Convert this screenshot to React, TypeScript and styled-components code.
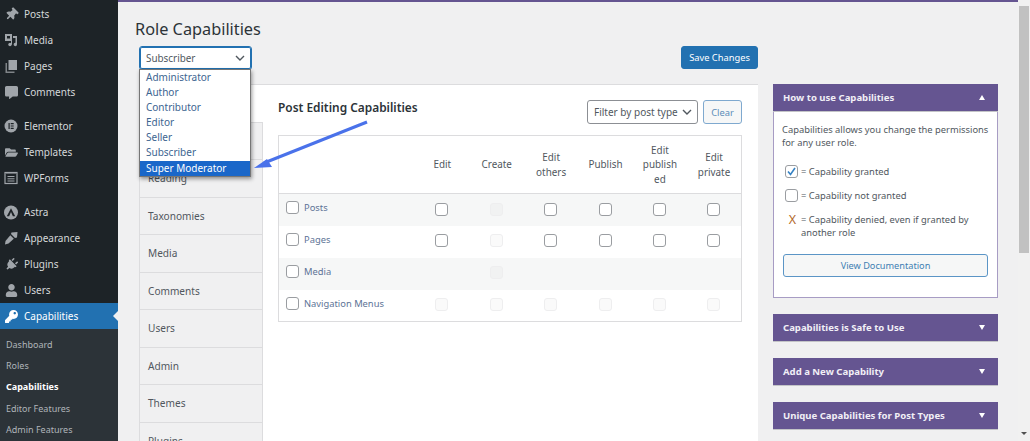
import React from "react"
import styled, { createGlobalStyle } from "styled-components"
import { FaThumbtack, FaCommentAlt, FaFolderOpen, FaPlug, FaUser, FaKey } from "react-icons/fa"

const GlobalStyle = createGlobalStyle`
  html, body {
    margin: 0;
    padding: 0;
    height: 100%;
    overflow: hidden;
    background: #f0f0f1;
  }
  * {
    box-sizing: border-box;
  }
`

const purple = "#655591"
const font = `"Noto Sans", "Open Sans", sans-serif`

const Page = styled.div`
  position: relative;
  display: flex;
  width: 1030px;
  height: 441px;
  overflow: hidden;
  font-family: ${font};
  font-size: 10px;
  color: #50575e;
`

const Sidebar = styled.nav`
  width: 118px;
  flex: none;
  background: #1d2327;
  padding-top: 1px;
`

const MenuGroup = styled.div`
  & + & {
    margin-top: 8px;
  }
`

const MenuItem = styled.div<{ $active?: boolean }>`
  position: relative;
  display: flex;
  align-items: center;
  height: 26px;
  padding-left: 4px;
  gap: 6px;
  color: ${(p) => (p.$active ? "#fff" : "#d5d8da")};
  background: ${(p) => (p.$active ? "#2271b1" : "transparent")};

  ${(p) =>
    p.$active &&
    `&::after {
      content: "";
      position: absolute;
      right: 0;
      top: 8px;
      border: 5px solid transparent;
      border-right-color: #f0f0f1;
      border-left-width: 0;
    }`}
`

const MenuIcon = styled.span<{ $active?: boolean }>`
  width: 14px;
  height: 14px;
  flex: none;
  display: flex;
  align-items: center;
  justify-content: center;
  font-size: 13px;
  color: ${(p) => (p.$active ? "#fff" : "#a0a5aa")};
`

const SubMenu = styled.div`
  background: #2c3338;
  padding-top: 4.500px;
  height: 200px;
`

const SubItem = styled.div<{ $current?: boolean }>`
  height: 21.4px;
  line-height: 21.4px;
  padding-left: 6px;
  font-size: 9px;
  color: ${(p) => (p.$current ? "#fff" : "#b0b5ba")};
  font-weight: ${(p) => (p.$current ? 700 : 400)};
`

const Main = styled.main`
  flex: 1;
  min-width: 0;
  border-top: 2px solid ${purple};
  padding-left: 17px;
`

const Title = styled.h1`
  margin: 16px 0 0;
  height: 23px;
  line-height: 23px;
  font-size: 16.3px;
  font-weight: 400;
  color: #2c3338;
`

const Toolbar = styled.div`
  display: flex;
  justify-content: space-between;
  width: 619px;
  margin: 5px 0 0 4px;
  height: 23px;
`

const SelectWrap = styled.div`
  position: relative;
  width: 113px;
`

const RoleSelect = styled.div`
  display: flex;
  align-items: center;
  justify-content: space-between;
  height: 24px;
  padding: 0 6px 0 6px;
  background: #fff;
  border: 1px solid #2271b1;
  border-radius: 3px;
  box-shadow: 0 0 0 1px #2271b1 inset;
  color: #50575e;
  font-size: 9.9px;
`

const Options = styled.ul`
  position: absolute;
  z-index: 3;
  left: 0;
  top: 23px;
  width: 112px;
  margin: 0;
  padding: 0;
  list-style: none;
  background: #fff;
  border: 1px solid #767676;
  box-shadow: 1px 2px 4px rgba(0, 0, 0, 0.4);
`

const Option = styled.li<{ $selected?: boolean }>`
  height: 15.1px;
  line-height: 15px;
  padding-left: 6px;
  color: ${(p) => (p.$selected ? "#fff" : "#3d6591")};
  background: ${(p) => (p.$selected ? "#1a67c9" : "transparent")};
`

const SaveButton = styled.button`
  width: 77px;
  height: 23px;
  padding: 0;
  border: 1px solid #2271b1;
  border-radius: 3px;
  background: #2271b1;
  color: #fff;
  font: inherit;
  font-size: 9.3px;
`

const Columns = styled.div`
  display: flex;
  gap: 15px;
  align-items: flex-start;
  margin: 15px 0 0 4px;
`

const Panel = styled.section`
  display: flex;
  width: 619px;
  height: 400px;
  background: #fff;
  border-top: 1px solid #dcdcde;
`

const Tabs = styled.div`
  width: 124px;
  flex: none;
`

const Tab = styled.div<{ $active?: boolean }>`
  display: flex;
  align-items: center;
  height: 37.5px;
  padding-left: 8px;
  background: ${(p) => (p.$active ? "#fff" : "#f0f0f1")};
  border-right: ${(p) => (p.$active ? "0" : "1px solid #dcdcde")};
  border-left: ${(p) => (p.$active ? "0" : "1px solid #dcdcde")};
  border-bottom: 1px solid #dcdcde;
  color: #50575e;
  font-size: 10.1px;
`

const Content = styled.div`
  flex: 1;
  padding: 0 16px 0 15px;
`

const ContentHead = styled.div`
  display: flex;
  align-items: flex-start;
  height: 50px;
  padding-top: 15px;
`

const SectionTitle = styled.h2`
  margin: 0;
  flex: 1;
  line-height: 14px;
  font-size: 11.9px;
  font-weight: 600;
  color: #2c3338;
`

const FilterSelect = styled.div`
  display: flex;
  align-items: center;
  justify-content: space-between;
  width: 111px;
  height: 24px;
  padding: 0 5px 0 6px;
  background: #fff;
  border: 1px solid #8c8f94;
  border-radius: 3px;
  color: #50575e;
  white-space: nowrap;
`

const ClearButton = styled.button`
  width: 39px;
  height: 24px;
  margin-left: 5px;
  padding: 0;
  border: 1px solid #7fa9cf;
  border-radius: 3px;
  background: #f6f7f7;
  color: #5b8db8;
  font: inherit;
  font-size: 9.3px;
`

const Table = styled.table`
  width: 464px;
  table-layout: fixed;
  border-collapse: collapse;
  border: 1px solid #dcdcde;
`

const HeadCell = styled.th`
  width: 54.4px;
  height: 58px;
  padding: 0 8px;
  font-weight: 400;
  font-size: 9.9px;
  text-align: center;
  line-height: 14.5px;
  color: #50575e;
  border-bottom: 1px solid #dcdcde;
  overflow-wrap: anywhere;
`

const LabelHead = styled.th`
  height: 58px;
  border-bottom: 1px solid #dcdcde;
`

const Row = styled.tr<{ $striped?: boolean }>`
  height: 32px;
  background: ${(p) => (p.$striped ? "#f6f7f7" : "#fff")};
`

const LabelCell = styled.td`
  padding: 0 0 1px 7px;
  color: #5d7396;
  font-size: 9.35px;
  white-space: nowrap;
`

const CheckCell = styled.td`
  padding: 0 1px 3px 0;
  text-align: center;
`

const Check = styled.span<{ $disabled?: boolean }>`
  display: inline-flex;
  align-items: center;
  justify-content: center;
  width: 13px;
  height: 13px;
  vertical-align: middle;
  border: 1px solid ${(p) => (p.$disabled ? "#eeeeef" : "#9a9da1")};
  border-radius: 3px;
  background: ${(p) => (p.$disabled ? "rgba(0, 0, 0, 0.02)" : "#fff")};
`

const LabelRow = styled.span`
  display: inline-flex;
  align-items: center;
  gap: 5px;
`

const Side = styled.aside`
  width: 225px;
  flex: none;
  display: flex;
  flex-direction: column;
  gap: 16px;
`

const Box = styled.div`
  background: #fff;
`

const BoxHead = styled.div`
  display: flex;
  align-items: center;
  justify-content: space-between;
  height: 28px;
  padding: 0 13px 0 10px;
  background: ${purple};
  color: #f1eff6;
  font-weight: 700;
  font-size: 9.55px;
  border-bottom: 1px solid #c3c4c7;
`

const Caret = styled.span<{ $up?: boolean }>`
  width: 0;
  height: 0;
  border-left: 3.5px solid transparent;
  border-right: 3.5px solid transparent;
  ${(p) => (p.$up ? "border-bottom: 5px solid #fff;" : "border-top: 5px solid #fff;")}
`

const BoxBody = styled.div`
  height: 186px;
  padding: 11px 8px 0;
  border: 1px solid #a79cc4;
  border-top: 0;
  font-size: 9.35px;
  line-height: 13px;
`

const Intro = styled.p`
  margin: 0 0 16px;
`

const Legend = styled.div`
  display: grid;
  grid-template-columns: 15px 1fr;
  column-gap: 1px;
  row-gap: 11px;
  padding-left: 3px;
  align-items: center;
`

const Denied = styled.span`
  color: #b26a2a;
  font-size: 12.5px;
  text-align: center;
  line-height: 13px;
  align-self: start;
`

const DocButton = styled.div`
  display: flex;
  align-items: center;
  justify-content: center;
  height: 23px;
  margin: 15px 0 0 1px;
  width: 205px;
  border: 1px solid #5b95c6;
  border-radius: 3px;
  background: #f6f7f7;
  color: #3f7fb3;
  font-size: 9.2px;
`

const Scrollbar = styled.div`
  position: relative;
  width: 12px;
  flex: none;
  background: #f1f1f1;
`

const Thumb = styled.div`
  width: 10px;
  height: 247px;
  margin: 6px 0 0 0.5px;
  background: #c1c1c1;
`

const ScrollArrow = styled.span`
  position: absolute;
  left: 3px;
  bottom: 6px;
  width: 0;
  height: 0;
  border-left: 3px solid transparent;
  border-right: 3px solid transparent;
  border-top: 3px solid #505050;
`

const ArrowOverlay = styled.svg`
  position: absolute;
  z-index: 4;
  left: 240px;
  top: 110px;
`

const Chevron = () => (
  <svg width="10" height="6" viewBox="0 0 10 6">
    <path d="M1 1l4 4 4-4" fill="none" stroke="#50575e" strokeWidth="1.4" />
  </svg>
)

const MediaIcon = () => (
  <svg width="14" height="14" viewBox="0 0 14 14" fill="currentColor">
    <path d="M1 1h7v7H1zM3 3v2.6h3V3zM9 3h4v8.5a1.7 1.7 0 1 1-1.5-1.7V5H9z" fillRule="evenodd" />
    <circle cx="6" cy="11.5" r="1.7" />
    <path d="M7 7h1v4.500H7z" />
  </svg>
)

const PagesIcon = () => (
  <svg width="14" height="14" viewBox="0 0 14 14" fill="currentColor">
    <path d="M4.500 1H13v10H4.500z" />
    <path d="M1.500 4H3v8.500h7.500V14H1.500z" opacity="0.75" />
  </svg>
)

const BrushIcon = () => (
  <svg width="14" height="14" viewBox="0 0 14 14" fill="currentColor">
    <path d="M7.500 1.500L13.500 1 13 6.500 11 7 7 3z" />
    <path d="M6.300 4.200L9.800 7.700 4.500 12.500 1 13.500 1.500 10z" />
  </svg>
)

const ElementorIcon = () => (
  <svg width="14" height="14" viewBox="0 0 14 14">
    <circle cx="7" cy="7" r="6.500" fill="currentColor" />
    <path d="M4.500 4h1.200v6H4.500zM6.700 4h3v1.200h-3zM6.700 6.400h3v1.200h-3zM6.700 8.800h3V10h-3z" fill="#1d2327" />
  </svg>
)

const FormsIcon = () => (
  <svg width="14" height="14" viewBox="0 0 14 14" fill="none" stroke="currentColor">
    <rect x="1" y="1.500" width="12" height="11" strokeWidth="1.200" />
    <path d="M3 1v2M5 1v2M7 1v2M9 1v2M11 1v2M3.500 5.500h7M3.500 7.800h7M3.500 10h7" strokeWidth="1" />
  </svg>
)

const AstraIcon = () => (
  <svg width="15" height="15" viewBox="0 0 15 15">
    <circle cx="7.500" cy="7.500" r="7.500" fill="currentColor" />
    <path d="M7.500 3L3 11.500h2.500L7.500 7l2 4.500H12z" fill="#1d2327" />
  </svg>
)

const menuGroups = [
  [
    { label: "Posts", icon: <FaThumbtack style={{ transform: "rotate(45deg)" }} /> },
    { label: "Media", icon: <MediaIcon /> },
    { label: "Pages", icon: <PagesIcon /> },
    { label: "Comments", icon: <FaCommentAlt /> },
  ],
  [
    { label: "Elementor", icon: <ElementorIcon /> },
    { label: "Templates", icon: <FaFolderOpen /> },
    { label: "WPForms", icon: <FormsIcon /> },
  ],
  [
    { label: "Astra", icon: <AstraIcon /> },
    { label: "Appearance", icon: <BrushIcon /> },
    { label: "Plugins", icon: <FaPlug style={{ transform: "rotate(45deg)" }} /> },
    { label: "Users", icon: <FaUser /> },
  ],
]

const subItems = ["Dashboard", "Roles", "Capabilities", "Editor Features", "Admin Features"]
const roles = ["Administrator", "Author", "Contributor", "Editor", "Seller", "Subscriber", "Super Moderator"]
const tabs = ["Editing", "Deletion", "Reading", "Taxonomies", "Media", "Comments", "Users", "Admin", "Themes", "Plugins", "Appearance"]
const columns = ["Edit", "Create", "Edit others", "Publish", "Edit published", "Edit private"]

// n = normal box, d = disabled box, - = nothing in that column
const rows = [
  { label: "Posts", cells: "ndnnnn" },
  { label: "Pages", cells: "ndnnnn" },
  { label: "Media", cells: "-d----" },
  { label: "Navigation Menus", cells: "dddddd" },
]

export default function App() {
  return (
    <Page>
      <GlobalStyle />
      <Sidebar>
        {menuGroups.map((group, i) => (
          <MenuGroup key={i}>
            {group.map((item) => (
              <MenuItem key={item.label}>
                <MenuIcon>{item.icon}</MenuIcon>
                {item.label}
              </MenuItem>
            ))}
          </MenuGroup>
        ))}
        <MenuItem $active>
          <MenuIcon $active>
            <FaKey />
          </MenuIcon>
          Capabilities
        </MenuItem>
        <SubMenu>
          {subItems.map((s) => (
            <SubItem key={s} $current={s === "Capabilities"}>
              {s}
            </SubItem>
          ))}
        </SubMenu>
      </Sidebar>

      <Main>
        <Title>Role Capabilities</Title>
        <Toolbar>
          <SelectWrap>
            <RoleSelect>
              Subscriber
              <Chevron />
            </RoleSelect>
            <Options>
              {roles.map((r) => (
                <Option key={r} $selected={r === "Super Moderator"}>
                  {r}
                </Option>
              ))}
            </Options>
          </SelectWrap>
          <SaveButton>Save Changes</SaveButton>
        </Toolbar>

        <Columns>
          <Panel>
            <Tabs>
              {tabs.map((t) => (
                <Tab key={t} $active={t === "Editing"}>
                  {t}
                </Tab>
              ))}
            </Tabs>
            <Content>
              <ContentHead>
                <SectionTitle>Post Editing Capabilities</SectionTitle>
                <FilterSelect>
                  Filter by post type
                  <Chevron />
                </FilterSelect>
                <ClearButton>Clear</ClearButton>
              </ContentHead>
              <Table>
                <thead>
                  <tr>
                    <LabelHead />
                    {columns.map((c) => (
                      <HeadCell key={c}>{c}</HeadCell>
                    ))}
                  </tr>
                </thead>
                <tbody>
                  {rows.map((row, i) => (
                    <Row key={row.label} $striped={i % 2 === 0}>
                      <LabelCell>
                        <LabelRow>
                          <Check />
                          {row.label}
                        </LabelRow>
                      </LabelCell>
                      {row.cells.split("").map((c, j) => (
                        <CheckCell key={j}>{c !== "-" && <Check $disabled={c === "d"} />}</CheckCell>
                      ))}
                    </Row>
                  ))}
                </tbody>
              </Table>
            </Content>
          </Panel>

          <Side>
            <Box>
              <BoxHead>
                How to use Capabilities
                <Caret $up />
              </BoxHead>
              <BoxBody>
                <Intro>Capabilities allows you change the permissions for any user role.</Intro>
                <Legend>
                  <Check>
                    <svg width="11" height="11" viewBox="0 0 11 11">
                      <path d="M2 5.500l2.500 3L9 2" fill="none" stroke="#3582c4" strokeWidth="1.600" />
                    </svg>
                  </Check>
                  <span>= Capability granted</span>
                  <Check />
                  <span>= Capability not granted</span>
                  <Denied>X</Denied>
                  <span>= Capability denied, even if granted by another role</span>
                </Legend>
                <DocButton>View Documentation</DocButton>
              </BoxBody>
            </Box>
            <BoxHead>
              Capabilities is Safe to Use
              <Caret />
            </BoxHead>
            <BoxHead>
              Add a New Capability
              <Caret />
            </BoxHead>
            <BoxHead>
              Unique Capabilities for Post Types
              <Caret />
            </BoxHead>
          </Side>
        </Columns>
      </Main>

      <Scrollbar>
        <Thumb />
        <ScrollArrow />
      </Scrollbar>

      <ArrowOverlay width="140" height="70" viewBox="0 0 140 70">
        <path d="M127 12L24 53" stroke="#4a72ea" strokeWidth="3" fill="none" />
        <path d="M14 58L27 49L32 57Z" fill="#4a72ea" />
      </ArrowOverlay>
    </Page>
  )
}
